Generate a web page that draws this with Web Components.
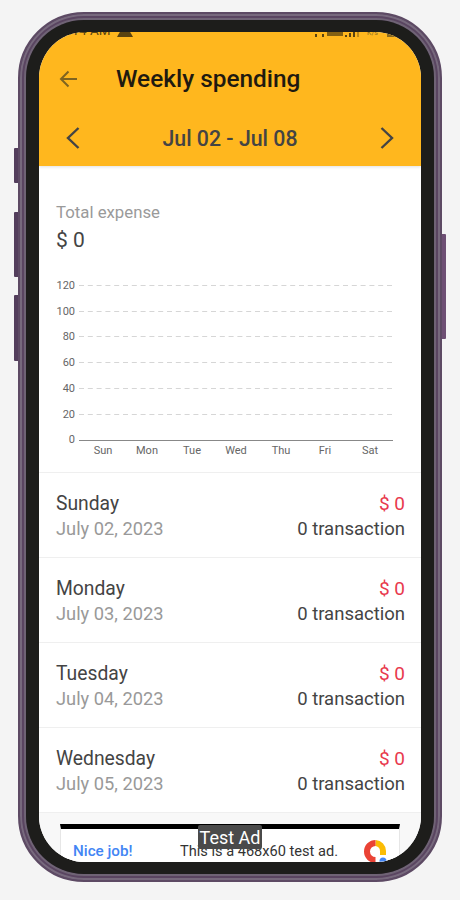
<!DOCTYPE html>
<html lang="en">
<head>
<meta charset="UTF-8">
<title>Weekly spending</title>
<style>
  html, body { margin: 0; background: #f4f4f4; font-family: Roboto, "Liberation Sans", sans-serif; }
</style>
</head>
<body>
<phone-frame>
  <app-header title="Weekly spending" range="Jul 02 - Jul 08"></app-header>
  <total-card label="Total expense" amount="$ 0"></total-card>
  <week-chart></week-chart>
  <day-row day="Sunday" date="July 02, 2023"></day-row>
  <day-row day="Monday" date="July 03, 2023"></day-row>
  <day-row day="Tuesday" date="July 04, 2023"></day-row>
  <day-row day="Wednesday" date="July 05, 2023"></day-row>
  <ad-banner></ad-banner>
</phone-frame>

<script>
  customElements.define('phone-frame', class extends HTMLElement {
    constructor() {
      super();
      this.attachShadow({ mode: 'open' }).innerHTML = `
        <style>
          :host {
            display: block;
            position: relative;
            box-sizing: border-box;
            width: 424px;
            height: 870px;
            margin: 12px 0 0 18px;
            border: 2px solid #5d4a64;
            border-radius: 66px;
            background: #5d4a64;
            box-shadow: inset 0 0 0 2px #77697d, inset 0 0 0 4px #5a4561, inset 0 0 0 6px #6f6375;
          }
          .bezel {
            box-sizing: border-box;
            height: 100%;
            margin: 0;
            border: 6px solid transparent;
            border-radius: 64px;
            background: #1d1d1b;
            background-clip: padding-box;
            padding: 12px 13px;
          }
          .screen {
            height: 830px;
            border-radius: 46px;
            overflow: hidden;
            background: #fff;
            display: flex;
            flex-direction: column;
          }
          .btn { position: absolute; width: 4px; background: #533e5c; border-radius: 1px 0 0 1px; }
          .b1 { left: -6px; top: 134px; height: 35px; }
          .b2 { left: -6px; top: 198px; height: 65px; }
          .b3 { left: -6px; top: 281px; height: 66px; }
          .b4 { right: -6px; top: 220px; height: 105px; background: #6e4f74; border-radius: 0 1px 1px 0; }
        </style>
        <span class="btn b1"></span><span class="btn b2"></span><span class="btn b3"></span><span class="btn b4"></span>
        <div class="bezel"><div class="screen"><slot></slot></div></div>`;
    }
  });

  customElements.define('app-header', class extends HTMLElement {
    constructor() {
      super();
      this.attachShadow({ mode: 'open' }).innerHTML = `
        <style>
          :host {
            display: block;
            position: relative;
            flex: none;
            height: 134px;
            background: #ffb71e;
            box-shadow: 0 1px 3px rgba(0,0,0,.12);
            color: #1f1a10;
          }
          .status {
            height: 5px;
            overflow: hidden;
            display: flex;
            justify-content: space-between;
            align-items: flex-end;
            padding: 0 24px 0 14px;
            font-size: 13.5px;
            line-height: 14px;
            color: #5a4310;
          }
          .status > div { display: flex; align-items: flex-end; gap: 6px; }
          .status svg { display: block; flex: none; }
          .status small { font-size: 7px; line-height: 7px; color: #8a6a20; }
          .title-row {
            display: flex;
            align-items: center;
            height: 50px;
            margin-top: 17px;
            padding-left: 20px;
          }
          .title-row svg { flex: none; }
          h1 { margin: 0 0 0 39px; font-size: 24.4px; font-weight: 500; line-height: 28px; }
          .range-row {
            display: flex;
            align-items: center;
            justify-content: space-between;
            height: 40px;
            margin-top: 14px;
            padding: 0 27px;
            color: #444;
          }
          .range-row b { font-size: 21.3px; font-weight: 500; }
        </style>
        <div class="status">
          <div><span>11:14 AM</span>
            <svg width="16" height="14" viewBox="0 0 16 14"><path d="M8 0 16 14H0Z" fill="#5a4310"/></svg>
          </div>
          <div>
            <svg width="46" height="5" viewBox="0 0 46 5" fill="#5a4310">
              <rect x="0" y="2" width="2" height="3"/><rect x="7" y="2" width="2" height="3"/>
              <rect x="12" y="0" width="16" height="4" opacity=".75"/>
              <rect x="30" y="3" width="2" height="2"/><rect x="34" y="1" width="2" height="4"/><rect x="38" y="0" width="2" height="5"/><rect x="42" y="0" width="2" height="5" opacity=".4"/>
            </svg>
            <small>K/s</small>
            <svg width="10" height="3" viewBox="0 0 10 3" fill="#8a6a20" style="margin-left:3px"><rect width="10" height="3"/></svg>
          </div>
        </div>
        <div class="title-row">
          <svg width="18" height="18" viewBox="0 0 18 18" fill="none" stroke="#7f6420" stroke-width="2">
            <path d="M18 9H2M9.5 1.5 2 9l7.5 7.5"/>
          </svg>
          <h1>${this.getAttribute('title')}</h1>
        </div>
        <div class="range-row">
          <svg width="14" height="22" viewBox="0 0 14 22" fill="none" stroke="#444" stroke-width="2.4"><path d="M12.5 1 2 11l10.5 10"/></svg>
          <b>${this.getAttribute('range')}</b>
          <svg width="14" height="22" viewBox="0 0 14 22" fill="none" stroke="#444" stroke-width="2.4"><path d="M1.5 1 12 11 1.5 21"/></svg>
        </div>`;
    }
  });

  customElements.define('total-card', class extends HTMLElement {
    constructor() {
      super();
      this.attachShadow({ mode: 'open' }).innerHTML = `
        <style>
          :host { display: block; flex: none; box-sizing: border-box; padding: 36px 17px 0; height: 86px; }
          .label { font-size: 16.8px; line-height: 20px; color: #9a9a9a; }
          .amount { font-size: 21px; line-height: 26px; margin-top: 5px; color: #444; }
        </style>
        <div class="label">${this.getAttribute('label')}</div>
        <div class="amount">${this.getAttribute('amount')}</div>`;
    }
  });

  customElements.define('week-chart', class extends HTMLElement {
    constructor() {
      super();
      const ys = [[120, 33], [100, 59], [80, 84], [60, 110], [40, 136], [20, 162]];
      const days = [['Sun', 64], ['Mon', 108], ['Tue', 153], ['Wed', 197], ['Thu', 242], ['Fri', 286], ['Sat', 331]];
      const grid = ys.map(([v, y]) => `
        <text x="36" y="${y + 4}" text-anchor="end">${v}</text>
        <line x1="40" x2="354" y1="${y + .5}" y2="${y + .5}" stroke="#d6d6d6" stroke-dasharray="5 3.8"/>`).join('');
      const labels = days.map(([d, x]) => `<text x="${x}" y="202" text-anchor="middle">${d}</text>`).join('');
      this.attachShadow({ mode: 'open' }).innerHTML = `
        <style>
          :host { display: block; flex: none; box-sizing: border-box; height: 221px; border-bottom: 1px solid #efefef; }
          svg { display: block; font-size: 11px; fill: #666; }
        </style>
        <svg width="382" height="220" viewBox="0 0 382 220">
          ${grid}
          <text x="36" y="191" text-anchor="end">0</text>
          <line x1="40" x2="354" y1="188.5" y2="188.5" stroke="#888"/>
          ${labels}
        </svg>`;
    }
  });

  customElements.define('day-row', class extends HTMLElement {
    constructor() {
      super();
      this.attachShadow({ mode: 'open' }).innerHTML = `
        <style>
          :host {
            display: grid;
            grid-template-columns: 1fr auto;
            align-content: center;
            row-gap: 1px;
            flex: none;
            box-sizing: border-box;
            height: 85px;
            padding: 2px 16px 0 17px;
            border-bottom: 1px solid #efefef;
            font-size: 18.3px;
            line-height: 24px;
          }
          .day { color: #444; font-size: 19.3px; }
          .date { color: #999; }
          .total { color: #e8394d; text-align: right; font-size: 19px; }
          .count { color: #444; text-align: right; font-size: 18.5px; }
        </style>
        <div class="day">${this.getAttribute('day')}</div>
        <div class="total">$ 0</div>
        <div class="date">${this.getAttribute('date')}</div>
        <div class="count">0 transaction</div>`;
    }
  });

  customElements.define('ad-banner', class extends HTMLElement {
    constructor() {
      super();
      this.attachShadow({ mode: 'open' }).innerHTML = `
        <style>
          :host {
            display: block;
            position: relative;
            flex: none;
            height: 49px;
            padding: 11px 21px 0;
            box-sizing: border-box;
            background: #f8f8f8;
          }
          .ad {
            box-sizing: border-box;
            height: 70px;
            border-top: 5px solid #000;
            border-left: 1px solid #e6e6e6;
            border-right: 1px solid #e6e6e6;
            background: #fff;
            display: flex;
            align-items: flex-start;
            padding: 12px 12px 0 12px;
          }
          .nice { font-size: 15.2px; font-weight: 500; color: #4285f4; line-height: 20px; width: 107px; }
          .msg { font-size: 14.6px; color: #333; line-height: 20px; flex: 1; white-space: nowrap; }
          svg { display: block; flex: none; margin-top: -1px; }
          .tag {
            position: absolute;
            left: 159px;
            top: 12px;
            width: 64px;
            height: 24px;
            border-radius: 2px;
            background: #4a4a4a;
            color: #fff;
            font-size: 18px;
            line-height: 25px;
            text-align: center;
          }
        </style>
        <div class="ad">
          <span class="nice">Nice job!</span>
          <span class="msg">This is a 468x60 test ad.</span>
          <svg width="23" height="24" viewBox="0 0 23 24" fill="none" stroke-width="6">
            <path d="M19 15V11A8 8 0 0 0 11.5 3" stroke="#fbbc04"/>
            <path d="M11.5 3A8 8 0 0 0 11.5 20" stroke="#ea4335"/>
            <circle cx="19" cy="21" r="3.5" fill="#4285f4"/>
          </svg>
        </div>
        <div class="tag">Test Ad</div>`;
    }
  });
</script>
</body>
</html>
